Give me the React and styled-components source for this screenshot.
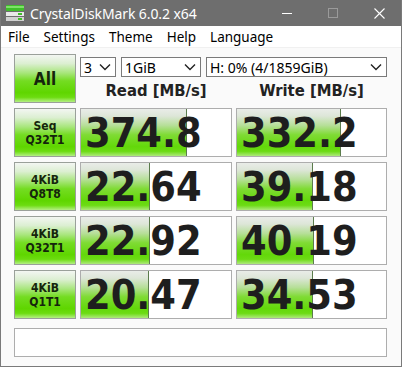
import React from "react";
import styled, { createGlobalStyle } from "styled-components";

const GlobalStyle = createGlobalStyle`
  html, body { margin: 0; padding: 0; background: #ffffff; }
  * { box-sizing: border-box; }
`;

const Window = styled.div`
  width: 402px;
  height: 367px;
  display: flex;
  flex-direction: column;
  border: 1px solid #7a7a7a;
  border-top: none;
  background: #fafafa;
  overflow: hidden;
`;

const TitleBar = styled.div`
  height: 26px;
  margin: 0 -1px;
  background: #6e6e6e;
  display: flex;
  align-items: center;
  color: #ffffff;
  font-family: "Noto Sans", "Open Sans", sans-serif;
  font-size: 14px;
  flex-shrink: 0;
`;

const AppIcon = styled.svg`
  margin-left: 5px;
  margin-right: 5px;
  flex-shrink: 0;
`;

const Title = styled.span`
  flex: 1;
  white-space: nowrap;
  letter-spacing: -0.1px;
`;

const CaptionButton = styled.div`
  width: 46px;
  height: 26px;
  display: flex;
  align-items: center;
  justify-content: center;
`;

const MenuBar = styled.div`
  height: 22px;
  background: #ffffff;
  display: flex;
  align-items: center;
  padding-left: 7px;
  gap: 14px;
  font-family: "Noto Sans", "Open Sans", sans-serif;
  font-size: 13.5px;
  color: #000;
  border-bottom: 1px solid #f0f0f0;
  flex-shrink: 0;
`;

const MenuItem = styled.span`
  white-space: nowrap;
`;

const Client = styled.div`
  flex: 1;
  padding: 6px 14px 0 13px;
`;

const Grid = styled.div`
  display: grid;
  grid-template-columns: 62px 152px 151px;
  grid-auto-rows: 49px;
  column-gap: 4px;
  row-gap: 5px;
`;

const GreenButton = styled.div`
  border: 1px solid #9aa09a;
  background: linear-gradient(
    to bottom,
    #f3f6f2 0%,
    #dcefd2 18%,
    #a8e67c 38%,
    #74dc22 55%,
    #5fd600 80%,
    #6cdc10 90%,
    #b4ef84 100%
  );
  display: flex;
  flex-direction: column;
  align-items: center;
  justify-content: center;
  font-family: "DejaVu Sans Condensed", "DejaVu Sans", sans-serif;
  font-stretch: condensed;
  font-weight: bold;
  color: #15250c;
  font-size: ${(p) => (p.$big ? "17px" : "12px")};
  line-height: 14px;
  text-align: center;
`;

const TopRight = styled.div`
  grid-column: 2 / 4;
  display: flex;
  flex-direction: column;
  padding-top: 3px;
`;

const SelectRow = styled.div`
  display: flex;
  gap: 5px;
  height: 20px;
`;

const SelectBox = styled.div`
  width: ${(p) => p.$w};
  flex: ${(p) => (p.$grow ? "1" : "none")};
  height: 20px;
  border: 1px solid #7a7a7a;
  background: #ffffff;
  display: flex;
  align-items: center;
  justify-content: space-between;
  padding: 0 4px 0 3px;
  font-family: "Noto Sans", "Open Sans", sans-serif;
  font-size: 14px;
  color: #000;
  white-space: nowrap;
`;

const Headers = styled.div`
  flex: 1;
  display: grid;
  grid-template-columns: 152px 151px;
  column-gap: 4px;
  align-items: center;
`;

const Header = styled.div`
  text-align: center;
  font-family: "DejaVu Sans Condensed", "DejaVu Sans", sans-serif;
  font-stretch: condensed;
  font-weight: bold;
  font-size: 16.5px;
  color: #222;
  padding-top: 1px;
`;

const ValueCell = styled.div`
  position: relative;
  border: 1px solid #adadad;
  background: #ffffff;
  display: flex;
  align-items: center;
  padding-left: 4px;
  overflow: hidden;
`;

const Fill = styled.div`
  position: absolute;
  left: 0;
  top: 0;
  bottom: 0;
  border-right: 1px solid #5b7c4c;
  background: linear-gradient(
    to bottom,
    #e9ece8 0%,
    #dde6d8 15%,
    #b6df98 35%,
    #7fdb34 55%,
    #63d80a 80%,
    #6cdb14 90%,
    #aee97c 100%
  );
`;

const Value = styled.span`
  position: relative;
  font-family: "DejaVu Sans Condensed", "DejaVu Sans", sans-serif;
  font-stretch: condensed;
  font-weight: bold;
  font-size: 41px;
  line-height: 1;
  color: #1e1e1e;
  margin-top: 1px;
`;

const Comment = styled.div`
  margin-top: 9px;
  height: 29px;
  border: 1px solid #adadad;
  background: #ffffff;
`;

const Chevron = () => (
  <svg width="12" height="8" viewBox="0 0 12 8">
    <path d="M1 1.5 L6 6.5 L11 1.5" fill="none" stroke="#222" strokeWidth="1.4" />
  </svg>
);

const rows = [
  { l1: "Seq", l2: "Q32T1", r: "374.8", rw: 106, w: "332.2", ww: 104 },
  { l1: "4KiB", l2: "Q8T8", r: "22.64", rw: 69, w: "39.18", ww: 76 },
  { l1: "4KiB", l2: "Q32T1", r: "22.92", rw: 69, w: "40.19", ww: 77 },
  { l1: "4KiB", l2: "Q1T1", r: "20.47", rw: 68, w: "34.53", ww: 76 },
];

export default function App() {
  return (
    <>
      <GlobalStyle />
      <Window>
        <TitleBar>
          <AppIcon width="20" height="18" viewBox="0 0 20 18">
            <rect x="1" y="1" width="18" height="6" rx="1" fill="#3fbf2a" />
            <rect x="1" y="2" width="18" height="2" fill="#7fe06a" />
            <rect x="1" y="8" width="18" height="4" fill="#e8e8e8" />
            <rect x="1" y="13" width="18" height="4" fill="#d0d0d0" />
            <rect x="13" y="9" width="4" height="2" fill="#3fbf2a" />
            <rect x="13" y="14" width="4" height="2" fill="#3fbf2a" />
          </AppIcon>
          <Title>CrystalDiskMark 6.0.2 x64</Title>
          <CaptionButton>
            <svg width="10" height="10" viewBox="0 0 10 10">
              <path d="M0 5.5 H10" stroke="#ffffff" strokeWidth="1" />
            </svg>
          </CaptionButton>
          <CaptionButton>
            <svg width="10" height="10" viewBox="0 0 10 10">
              <rect x="0.5" y="0.5" width="9" height="9" fill="none" stroke="#9a9a9a" strokeWidth="1" />
            </svg>
          </CaptionButton>
          <CaptionButton>
            <svg width="11" height="11" viewBox="0 0 11 11">
              <path d="M0.5 0.5 L10.5 10.5 M10.5 0.5 L0.5 10.5" stroke="#ffffff" strokeWidth="1.1" />
            </svg>
          </CaptionButton>
        </TitleBar>
        <MenuBar>
          <MenuItem>File</MenuItem>
          <MenuItem>Settings</MenuItem>
          <MenuItem>Theme</MenuItem>
          <MenuItem>Help</MenuItem>
          <MenuItem>Language</MenuItem>
        </MenuBar>
        <Client>
          <Grid>
            <GreenButton $big>All</GreenButton>
            <TopRight>
              <SelectRow>
                <SelectBox $w="36px">
                  <span>3</span>
                  <Chevron />
                </SelectBox>
                <SelectBox $w="80px">
                  <span>1GiB</span>
                  <Chevron />
                </SelectBox>
                <SelectBox $grow>
                  <span>H: 0% (4/1859GiB)</span>
                  <Chevron />
                </SelectBox>
              </SelectRow>
              <Headers>
                <Header>Read [MB/s]</Header>
                <Header>Write [MB/s]</Header>
              </Headers>
            </TopRight>
            {rows.map((r, i) => (
              <React.Fragment key={i}>
                <GreenButton>
                  <span>{r.l1}</span>
                  <span>{r.l2}</span>
                </GreenButton>
                <ValueCell>
                  <Fill style={{ width: r.rw }} />
                  <Value>{r.r}</Value>
                </ValueCell>
                <ValueCell>
                  <Fill style={{ width: r.ww }} />
                  <Value>{r.w}</Value>
                </ValueCell>
              </React.Fragment>
            ))}
          </Grid>
          <Comment />
        </Client>
      </Window>
    </>
  );
}
